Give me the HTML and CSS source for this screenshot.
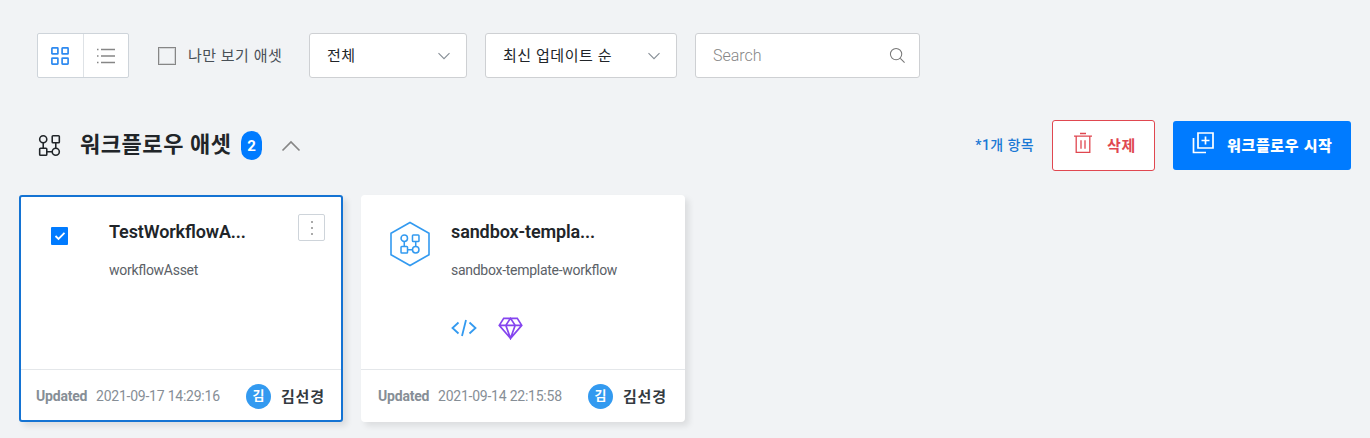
FILE: index.html
```html
<!DOCTYPE html>
<html lang="ko">
<head>
<meta charset="utf-8">
<title>워크플로우 애셋</title>
<link rel="stylesheet" href="styles.css">
</head>
<body>
<svg class="defs" width="0" height="0">
  <symbol id="flow" viewBox="0 0 22 22">
    <circle cx="5" cy="5" r="3.4"/><rect x="13.6" y="1.6" width="6.8" height="6.8" rx=".8"/>
    <rect x="1.6" y="13.6" width="6.8" height="6.8" rx=".8"/><circle cx="17" cy="17" r="3.4"/>
    <path d="M5 8.4v5.2M17 8.4v5.2M8.4 17h5.2"/>
  </symbol>
</svg>
<div class="toolbar">
  <div class="toggle">
    <button class="view"><svg class="grid-icon" width="20" height="20" viewBox="0 0 20 20"><rect x="1.9" y="1.9" width="6" height="6" rx=".5"/><rect x="12.1" y="1.9" width="6" height="6" rx=".5"/><rect x="1.9" y="12.1" width="6" height="6" rx=".5"/><rect x="12.1" y="12.1" width="6" height="6" rx=".5"/></svg></button>
    <button class="view"><svg class="list-icon" width="20" height="18" viewBox="0 0 20 18"><path d="M1 2.5h1.5M5 2.5h14M1 9h1.5M5 9h14M1 15.5h1.5M5 15.5h14"/></svg></button>
  </div>
  <label class="only-mine"><span class="box"></span><span class="label">나만 보기 애셋</span></label>
  <div class="field type"><span>전체</span><svg width="14" height="8" viewBox="0 0 14 8"><path d="M1.5 1.2 7 6.7l5.5-5.5"/></svg></div>
  <div class="field sort"><span>최신 업데이트 순</span><svg width="14" height="8" viewBox="0 0 14 8"><path d="M1.5 1.2 7 6.7l5.5-5.5"/></svg></div>
  <div class="field search"><span>Search</span><svg width="17" height="17" viewBox="0 0 18 18"><circle cx="7.5" cy="7.5" r="6"/><path d="m12 12 4.500 4.500"/></svg></div>
</div>
<div class="section">
  <svg class="section-icon" width="23" height="23"><use href="#flow"/></svg>
  <h1>워크플로우 애셋</h1>
  <span class="count">2</span>
  <svg class="collapse" width="20" height="12" viewBox="0 0 20 12"><path d="m1.500 10.500 8.500-8.500 8.500 8.500"/></svg>
  <span class="selected-count">*1개 항목</span>
  <button class="delete"><svg width="20" height="22" viewBox="0 0 20 22"><path d="M1 4.200h18M7 1.500h6M3.200 4.200v16.200h13.600V4.200M8 8.200v8.500M12 8.200v8.500"/></svg><span>삭제</span></button>
  <button class="start"><svg width="22" height="22" viewBox="0 0 22 22"><path d="M6 1h15v15H6zM13.500 4.500v8M9.500 8.500h8M1.500 6v14.500H14"/></svg><span>워크플로우 시작</span></button>
</div>
<div class="cards">
  <article class="card selected">
    <div class="body">
      <div class="mark"><span class="checked"><svg width="12" height="10" viewBox="0 0 12 10"><path d="m1.500 5 3 3 6-6.200"/></svg></span></div>
      <div class="info"><h2>TestWorkflowA...</h2><p>workflowAsset</p></div>
      <button class="more"><i></i><i></i><i></i></button>
    </div>
    <footer><b>Updated</b><time>2021-09-17 14:29:16</time><span class="avatar">김</span><strong>김선경</strong></footer>
  </article>
  <article class="card">
    <div class="body">
      <div class="mark"><svg class="hex" width="42" height="46" viewBox="0 0 42 46"><path d="M21 1.500 40 12.300v21.400L21 44.500 2 33.700V12.300z"/><use href="#flow" x="10.500" y="12.500" width="21" height="21"/></svg></div>
      <div class="info"><h2>sandbox-templa...</h2><p>sandbox-template-workflow</p>
        <div class="tags">
          <svg class="code" width="26" height="18" viewBox="0 0 26 18"><path d="M7.500 3.500 1.500 9l6 5.500M18.500 3.500l6 5.500-6 5.500M15 1l-4 16"/></svg>
          <svg class="gem" width="25" height="23" viewBox="0 0 24 22"><path d="M5.500 1.200h13l4.300 6.800L12 20.500 1.200 8zM1.200 8h21.600M12 1.200 7.500 8 12 20.500 16.500 8z"/></svg>
        </div>
      </div>
    </div>
    <footer><b>Updated</b><time>2021-09-14 22:15:58</time><span class="avatar">김</span><strong>김선경</strong></footer>
  </article>
</div>
</body>
</html>
```
FILE: styles.css
```css
* { box-sizing: border-box; }
body { margin: 0; padding: 33px 19px 0; height: 438px; overflow: hidden; background: #f1f3f5; color: #212529; font-family: Roboto, "Noto Sans CJK KR", sans-serif; white-space: nowrap; }
button { font: inherit; padding: 0; margin: 0; }
svg { fill: none; stroke: currentColor; flex: none; display: block; }
.defs { position: absolute; }
.toolbar { display: flex; height: 45px; padding-left: 18px; }
.toggle { display: flex; width: 92px; border: 1px solid #ced4da; border-radius: 2px; background: #fff; }
.view { display: flex; flex: 1; align-items: center; justify-content: center; border: 0; background: none; }
.view + .view { border-left: 1px solid #dee2e6; }
.grid-icon { color: #2f8af0; stroke-width: 1.7; }
.list-icon { color: #868686; stroke-width: 1.3; }
.only-mine { display: flex; align-items: center; width: 180px; padding-left: 29px; font-size: 15px; color: #495057; }
.box { width: 18px; height: 18px; margin-right: 12px; border: 1px solid #868686; box-shadow: inset 0 0 0 1px #d3d5d7; }
.label { letter-spacing: .5px; padding-bottom: 2px; }
.field { display: flex; align-items: center; justify-content: space-between; padding: 0 15px 0 17px; border: 1px solid #ced0d3; border-radius: 3px; background: #fff; font-size: 15px; letter-spacing: .55px; }
.field span { padding-bottom: 2px; }
.field svg { color: #868e96; stroke-width: 1.1; }
.type { width: 158px; margin-right: 18px; }
.sort { width: 192px; margin-right: 18px; }
.search { width: 225px; padding-right: 13px; font-size: 16px; font-weight: 300; color: #868686; letter-spacing: 0; }
.search span { padding-bottom: 0; }
.field.search svg { color: #777; }
.section { display: flex; align-items: center; height: 51px; margin-top: 42px; }
.section-icon { margin: -1px 0 0 19px; stroke-width: 1.5; }
h1 { width: 153px; margin: 0 8px 2px 19px; font-size: 22px; line-height: 32px; font-weight: 700; letter-spacing: .55px; }
.count { width: 21px; height: 29px; border-radius: 11px; background: #007bff; color: #fff; font-size: 15px; line-height: 30px; font-weight: 700; text-align: center; }
.collapse { margin-left: 19px; color: #868686; stroke-width: 1.7; }
.selected-count { margin: 0 18px 3px auto; color: #1978d4; font-size: 14px; font-weight: 500; letter-spacing: .4px; }
.delete, .start { display: flex; align-items: center; border-radius: 3px; font-size: 15px; font-weight: 700; letter-spacing: .7px; }
.delete span, .start span { padding-bottom: 2px; }
.delete { width: 103px; height: 51px; padding-left: 20px; border: 1px solid #e04750; background: #fff; color: #e04750; }
.delete svg { margin: -5px 14px 0 0; stroke-width: 1.3; }
.start { width: 178px; height: 49px; margin-left: 18px; padding-left: 19px; border: 0; background: #007bff; color: #fff; font-weight: 900; letter-spacing: .65px; }
.start svg { margin: -5px 13px 0 0; stroke-width: 1.7; }
.cards { display: flex; gap: 18px; margin-top: 24px; }
.card { display: flex; flex-direction: column; width: 324px; height: 227px; border: 2px solid #fff; border-radius: 4px; background: #fff; box-shadow: 4px 4px 6px rgba(0,0,0,.09); }
.selected { border-color: #1473d3; border-radius: 3px; }
.body { display: flex; flex: none; height: 172px; }
.mark { width: 88px; padding: 24px 0 0 26px; }
.selected .mark { padding: 30px 0 0 30px; }
.checked { display: flex; align-items: center; justify-content: center; width: 17px; height: 18px; background: #007bff; color: #fff; border-radius: 1px; }
.checked svg { stroke-width: 1.8; }
.hex { color: #339af0; stroke-width: 1.6; }
.info { width: 189px; padding-top: 22px; }
h2 { margin: 0; font-size: 18px; line-height: 25px; font-weight: 600; letter-spacing: -.12px; font-feature-settings: "liga" 1; }
p { margin: 16px 0 0; font-size: 14px; line-height: 20px; color: #5b6167; letter-spacing: -.28px; font-feature-settings: "liga" 1; }
.tags { display: flex; align-items: center; gap: 21px; height: 22px; margin-top: 37px; }
.code { color: #339af0; stroke-width: 1.8; }
.gem { color: #8545ef; stroke-width: 1.6; }
.more { display: flex; flex-direction: column; align-items: center; justify-content: center; gap: 4px; width: 27px; height: 27px; margin-top: 17px; border: 1px solid #ced4da; border-radius: 2px; background: #fff; }
.more i { width: 2px; height: 2px; background: #aaa; }
footer { display: flex; flex: none; align-items: center; height: 51px; margin: 0 -2px; padding: 2px 2px 0 17px; border-top: 1px solid #e4e7ea; color: #868e96; font-size: 14px; }
.selected footer { margin: 0; padding-left: 15px; padding-right: 0; }
footer b { width: 60px; font-weight: 700; letter-spacing: -.2px; }
time { width: 150px; letter-spacing: -.23px; }
.avatar { width: 25px; height: 25px; margin-right: 10px; border-radius: 50%; background: #339af0; color: #fff; font-size: 13px; line-height: 23px; text-align: center; font-weight: 700; }
footer strong { padding-bottom: 2px; color: #343a40; font-size: 15px; font-weight: 700; letter-spacing: .8px; }
```
